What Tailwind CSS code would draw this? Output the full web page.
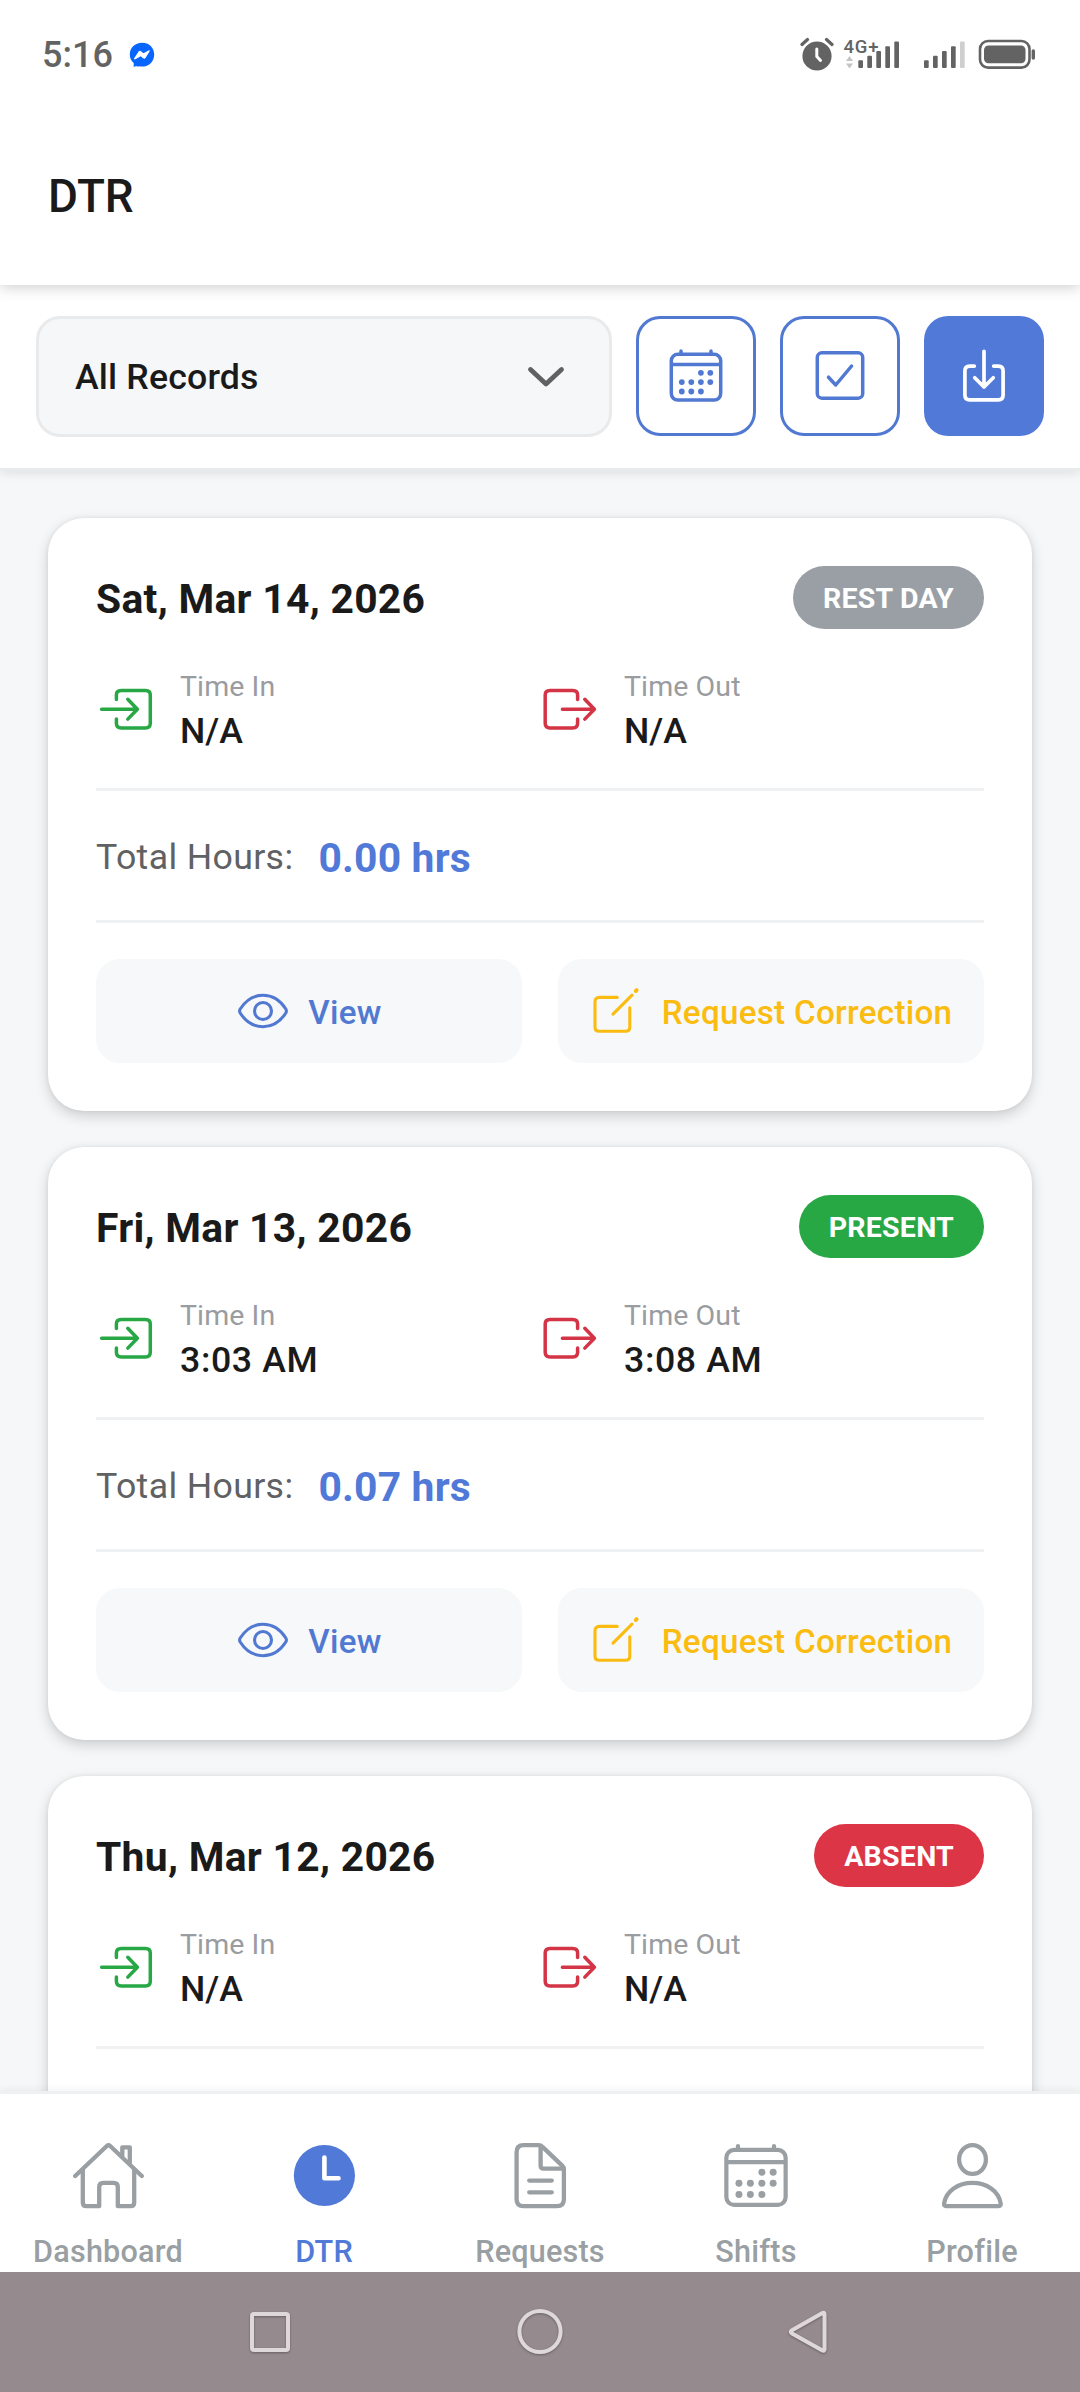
<!DOCTYPE html>
<html lang="en">
<head>
  <meta charset="UTF-8">
  <meta name="viewport" content="width=device-width, initial-scale=1.0">
  <title>DTR</title>
  <!-- Tailwind CSS -->
  <script src="https://cdn.jsdelivr.net/npm/@tailwindcss/browser@4"></script>
</head>
<body class="bg-white font-['Roboto',sans-serif] text-[#1a1a1a]">

  <!-- Shared icons -->
  <svg class="hidden" xmlns="http://www.w3.org/2000/svg">
    <symbol id="calendar" viewBox="0 0 60 60">
      <g fill="none" stroke="currentColor" stroke-width="3.5" stroke-linecap="round">
        <rect x="5.3" y="8.3" width="49.4" height="45.8" rx="6.5" />
        <path d="M6 18.4H54M15 5V8M45 5V8" />
      </g>
      <g fill="currentColor">
        <circle cx="34.9" cy="26.8" r="2.9" /><circle cx="44.3" cy="26.8" r="2.9" />
        <circle cx="15.8" cy="36.1" r="2.9" /><circle cx="25.3" cy="36.1" r="2.9" /><circle cx="34.9" cy="36.1" r="2.9" /><circle cx="44.3" cy="36.1" r="2.9" />
        <circle cx="15.8" cy="45.5" r="2.9" /><circle cx="25.3" cy="45.5" r="2.9" /><circle cx="34.9" cy="45.5" r="2.9" />
      </g>
    </symbol>
    <symbol id="time-in" viewBox="0 0 60 60">
      <path fill="none" stroke="currentColor" stroke-width="3.5" stroke-linecap="round" stroke-linejoin="round" d="M20.4 20.4V16.1Q20.4 11.5 25.2 11.5H49.5Q54.3 11.5 54.3 16.1V44.300Q54.3 49 49.5 49H25.2Q20.4 49 20.4 44.300V39.900M5.6 30.300H41.4M31.8 20.300L41.4 30.300L31.8 40.100" />
    </symbol>
    <symbol id="time-out" viewBox="0 0 60 60">
      <path fill="none" stroke="currentColor" stroke-width="3.5" stroke-linecap="round" stroke-linejoin="round" d="M37.6 20.4V16.1Q37.6 11.5 32.8 11.5H10Q5.2 11.5 5.2 16.1V44.300Q5.2 49 10 49H32.8Q37.6 49 37.6 44.300V39.900M22.4 30.300H54.4M44.8 20.300L54.4 30.300L44.8 40.100" />
    </symbol>
    <symbol id="eye" viewBox="0 0 54 54">
      <g fill="none" stroke="currentColor" stroke-width="3.1">
        <path d="M4.2 25C9 17.5 17 11.3 27 11.3S45 17.5 49.8 25Q51 27 49.8 29C45 36.5 37 42.7 27 42.7S9 36.5 4.2 29Q3 27 4.2 25Z" />
        <circle cx="27" cy="27" r="8.5" />
      </g>
    </symbol>
    <symbol id="edit" viewBox="0 0 54 54">
      <path fill="none" stroke="currentColor" stroke-width="3.1" stroke-linecap="round" stroke-linejoin="round" d="M27.2 13.4H9.3Q5 13.4 5 17.7V43Q5 47.3 9.3 47.3H35.5Q39.8 47.3 39.8 43V23.8M23 30.2L42 11.2" />
      <path fill="none" stroke="currentColor" stroke-width="4" stroke-linecap="round" d="M45.8 7L46.6 6.2" />
    </symbol>
  </svg>

  <div class="flex h-[2392px] w-[1080px] flex-col overflow-hidden">

    <!-- Status bar + title -->
    <header class="relative z-20 h-[285px] shrink-0 bg-white shadow-[0_2px_14px_rgba(0,0,0,0.2)]">
      <div class="flex h-[108px] items-center justify-between pl-[42px] pr-[44px] text-[#636363]">
        <div class="flex items-center gap-[16px]">
          <span class="mt-px text-[36px] font-medium leading-none">5:16</span>
          <svg class="mt-px size-[26px]" viewBox="0 0 26 26">
            <path fill="#0866ff" d="M13 .7C6 .7.8 5.7.8 12.4c0 3.4 1.4 6.3 3.9 8.5V25l2.6-1.1 1.6.8 1-.4c1 .2 2 .3 3.1.3 7 0 12.2-5.2 12.2-12.2S20 .7 13 .7Z" />
            <path fill="#fff" d="M5 16.4L9.6 9.6Q10.6 8.2 12 9.3L14.500 11.3L19.500 8.6Q21.500 7.8 20.500 9.6L16.500 16Q15.500 17.2 14.1 16.2L11.7 14.3L6.4 17.2Q4.500 17.700 5 16.4Z" />
          </svg>
        </div>
        <div class="flex items-center">
          <svg class="size-[34px]" viewBox="0 0 34 34">
            <circle cx="17" cy="19" r="14.6" fill="currentColor" />
            <path d="M2 7.5L7.5 2.5M32 7.5L26.5 2.5" stroke="currentColor" stroke-width="3.2" stroke-linecap="round" />
            <path d="M16.8 12V19.5L20.5 23.5" fill="none" stroke="#fff" stroke-width="3" stroke-linecap="round" />
          </svg>
          <svg class="ml-[9px] h-[34px] w-[58px]" viewBox="0 0 58 34" fill="currentColor">
            <text x="0.5" y="15.500" font-family="Roboto" font-size="18.5" font-weight="500" textLength="35">4G+</text>
            <path fill="#c4c4c4" d="M6.5 19L10 24H3ZM6.5 31.5L10 26.5H3Z" />
            <rect x="15.3" y="23.3" width="4.7" height="7.7" rx="1" /><rect x="24.3" y="18.7" width="4.7" height="12.3" rx="1" /><rect x="33.3" y="14" width="4.7" height="17" rx="1" /><rect x="42.3" y="9.3" width="4.7" height="21.7" rx="1" /><rect x="51.3" y="4.6" width="4.7" height="26.4" rx="1" />
          </svg>
          <svg class="ml-[21px] h-[34px] w-[44px]" viewBox="0 0 44 34" fill="currentColor">
            <rect x="2" y="23.3" width="4.7" height="7.7" rx="1" /><rect x="11" y="18.7" width="4.7" height="12.3" rx="1" /><rect x="20" y="14" width="4.7" height="17" rx="1" /><rect x="29" y="9.3" width="4.7" height="21.7" rx="1" />
            <rect x="38" y="4.6" width="4.7" height="26.4" rx="1" fill="#cfcfcf" />
          </svg>
          <svg class="ml-[12px] h-[34px] w-[58px]" viewBox="0 0 58 34">
            <rect x="2" y="4" width="49.5" height="26.6" rx="8" fill="none" stroke="currentColor" stroke-width="2.6" />
            <rect x="6" y="8.5" width="41.5" height="17.8" rx="4.5" fill="currentColor" />
            <rect x="53.6" y="12.2" width="3.4" height="10.6" rx="1.7" fill="currentColor" />
          </svg>
        </div>
      </div>
      <div class="flex h-[177px] items-center px-12">
        <h1 class="mt-px text-[45.9px] font-medium leading-none">DTR</h1>
      </div>
    </header>

    <!-- Filter bar -->
    <section class="relative z-10 flex h-[186px] shrink-0 gap-6 border-b-3 border-[#e8eaec] bg-white px-9 pt-[31px] shadow-[0_2px_10px_rgba(0,0,0,0.1)]">
      <div class="flex h-[121px] flex-1 items-center justify-between rounded-3xl border-3 border-[#e8eaeb] bg-[#f6f7f9] pl-9 pr-[43px]">
        <span class="pt-[3px] text-[35.7px] font-medium leading-none tracking-[0.15px]">All Records</span>
        <svg class="h-6 w-10 text-[#5f6163]" viewBox="0 0 40 24">
          <path d="M4.5 4.5L20 19L35.5 4.5" fill="none" stroke="currentColor" stroke-width="4.8" stroke-linecap="round" stroke-linejoin="round" />
        </svg>
      </div>
      <button class="flex size-30 items-center justify-center rounded-3xl border-3 border-[#5179d2] bg-white text-[#5179d2]">
        <svg class="size-15"><use href="#calendar" /></svg>
      </button>
      <button class="flex size-30 items-center justify-center rounded-3xl border-3 border-[#5179d2] bg-white text-[#5179d2]">
        <svg class="size-15" viewBox="0 0 60 60" fill="none" stroke="currentColor" stroke-width="3.5" stroke-linecap="round" stroke-linejoin="round">
          <rect x="7.3" y="6.8" width="45.4" height="45.4" rx="4.5" />
          <path d="M18.5 31.2L25.7 39L41.6 20" />
        </svg>
      </button>
      <button class="flex size-30 items-center justify-center rounded-3xl bg-[#5179d8] text-white">
        <svg class="size-15" viewBox="0 0 60 60" fill="none" stroke="currentColor" stroke-width="3.7" stroke-linecap="round" stroke-linejoin="round">
          <path d="M20.3 20.1H15.7Q10.9 20.1 10.9 24.9V49Q10.9 53.8 15.7 53.8H44.3Q49.1 53.8 49.1 49V24.9Q49.1 20.1 44.3 20.1H39.7M30 5.3V41M20.7 31.8L30 41L39.3 31.8" />
        </svg>
      </button>
    </section>

    <!-- Records -->
    <main class="flex min-h-0 flex-1 flex-col gap-9 overflow-hidden bg-[#f5f7f9] px-12 pt-[47px]">

      <article class="h-[593px] shrink-0 rounded-[36px] bg-white p-12 shadow-[0_5px_14px_rgba(0,0,0,0.17),0_0_4px_rgba(0,0,0,0.07)]">
        <div class="flex h-[63px] items-center justify-between">
          <h2 class="pt-[3px] text-[40.8px] font-bold leading-none tracking-[0.3px]">Sat, Mar 14, 2026</h2>
          <span class="flex h-[63px] items-center rounded-full bg-[#999fa5] px-[30px] pt-[3px] text-[28.5px] font-bold leading-none tracking-[0.25px] text-white">REST DAY</span>
        </div>
        <div class="mt-[35px] grid h-[127px] grid-cols-2 border-b-3 border-[#eff1f2] pb-[35px]">
          <div class="flex items-center gap-6">
            <svg class="size-15 text-[#28a745]"><use href="#time-in" /></svg>
            <div class="relative top-[2.5px]">
              <p class="text-[28.5px] leading-[40px] tracking-[0.1px] text-[#999ca0]">Time In</p>
              <p class="text-[35.7px] font-medium leading-[49px]">N/A</p>
            </div>
          </div>
          <div class="flex items-center gap-6">
            <svg class="size-15 text-[#d33446]"><use href="#time-out" /></svg>
            <div class="relative top-[2.5px]">
              <p class="text-[28.5px] leading-[40px] tracking-[0.1px] text-[#999ca0]">Time Out</p>
              <p class="text-[35.7px] font-medium leading-[49px]">N/A</p>
            </div>
          </div>
        </div>
        <div class="flex h-33 items-center gap-[25px] border-b-3 border-[#eff1f2] pt-[5px]">
          <span class="text-[35.7px] leading-none tracking-[0.35px] text-[#5f6163]">Total Hours:</span>
          <span class="text-[40.8px] font-bold leading-none tracking-[0.2px] text-[#5179d8]">0.00 hrs</span>
        </div>
        <div class="mt-9 grid grid-cols-2 gap-9">
          <button class="flex h-[104px] items-center justify-center gap-[18px] rounded-3xl bg-[#f6f8f9] text-[33.15px] font-medium tracking-[0.3px] text-[#5179d2]">
            <svg class="size-13.5"><use href="#eye" /></svg>
            <span class="pt-[3px]">View</span>
          </button>
          <button class="flex h-[104px] items-center justify-center gap-[18px] whitespace-nowrap rounded-3xl bg-[#f6f8f9] text-[33.15px] font-medium tracking-[0.3px] text-[#fbbc12]">
            <svg class="size-13.5"><use href="#edit" /></svg>
            <span class="pt-[3px]">Request Correction</span>
          </button>
        </div>
      </article>

      <article class="h-[593px] shrink-0 rounded-[36px] bg-white p-12 shadow-[0_5px_14px_rgba(0,0,0,0.17),0_0_4px_rgba(0,0,0,0.07)]">
        <div class="flex h-[63px] items-center justify-between">
          <h2 class="pt-[3px] text-[40.8px] font-bold leading-none tracking-[0.3px]">Fri, Mar 13, 2026</h2>
          <span class="flex h-[63px] items-center rounded-full bg-[#28a745] px-[30px] pt-[3px] text-[28.5px] font-bold leading-none tracking-[0.25px] text-white">PRESENT</span>
        </div>
        <div class="mt-[35px] grid h-[127px] grid-cols-2 border-b-3 border-[#eff1f2] pb-[35px]">
          <div class="flex items-center gap-6">
            <svg class="size-15 text-[#28a745]"><use href="#time-in" /></svg>
            <div class="relative top-[2.5px]">
              <p class="text-[28.5px] leading-[40px] tracking-[0.1px] text-[#999ca0]">Time In</p>
              <p class="text-[35.7px] font-medium leading-[49px] tracking-[0.6px]">3:03 AM</p>
            </div>
          </div>
          <div class="flex items-center gap-6">
            <svg class="size-15 text-[#d33446]"><use href="#time-out" /></svg>
            <div class="relative top-[2.5px]">
              <p class="text-[28.5px] leading-[40px] tracking-[0.1px] text-[#999ca0]">Time Out</p>
              <p class="text-[35.7px] font-medium leading-[49px] tracking-[0.6px]">3:08 AM</p>
            </div>
          </div>
        </div>
        <div class="flex h-33 items-center gap-[25px] border-b-3 border-[#eff1f2] pt-[5px]">
          <span class="text-[35.7px] leading-none tracking-[0.35px] text-[#5f6163]">Total Hours:</span>
          <span class="text-[40.8px] font-bold leading-none tracking-[0.2px] text-[#5179d8]">0.07 hrs</span>
        </div>
        <div class="mt-9 grid grid-cols-2 gap-9">
          <button class="flex h-[104px] items-center justify-center gap-[18px] rounded-3xl bg-[#f6f8f9] text-[33.15px] font-medium tracking-[0.3px] text-[#5179d2]">
            <svg class="size-13.5"><use href="#eye" /></svg>
            <span class="pt-[3px]">View</span>
          </button>
          <button class="flex h-[104px] items-center justify-center gap-[18px] whitespace-nowrap rounded-3xl bg-[#f6f8f9] text-[33.15px] font-medium tracking-[0.3px] text-[#fbbc12]">
            <svg class="size-13.5"><use href="#edit" /></svg>
            <span class="pt-[3px]">Request Correction</span>
          </button>
        </div>
      </article>

      <article class="h-[593px] shrink-0 rounded-[36px] bg-white p-12 shadow-[0_5px_14px_rgba(0,0,0,0.17),0_0_4px_rgba(0,0,0,0.07)]">
        <div class="flex h-[63px] items-center justify-between">
          <h2 class="pt-[3px] text-[40.8px] font-bold leading-none tracking-[0.3px]">Thu, Mar 12, 2026</h2>
          <span class="flex h-[63px] items-center rounded-full bg-[#dc3545] px-[30px] pt-[3px] text-[28.5px] font-bold leading-none tracking-[0.25px] text-white">ABSENT</span>
        </div>
        <div class="mt-[35px] grid h-[127px] grid-cols-2 border-b-3 border-[#eff1f2] pb-[35px]">
          <div class="flex items-center gap-6">
            <svg class="size-15 text-[#28a745]"><use href="#time-in" /></svg>
            <div class="relative top-[2.5px]">
              <p class="text-[28.5px] leading-[40px] tracking-[0.1px] text-[#999ca0]">Time In</p>
              <p class="text-[35.7px] font-medium leading-[49px]">N/A</p>
            </div>
          </div>
          <div class="flex items-center gap-6">
            <svg class="size-15 text-[#d33446]"><use href="#time-out" /></svg>
            <div class="relative top-[2.5px]">
              <p class="text-[28.5px] leading-[40px] tracking-[0.1px] text-[#999ca0]">Time Out</p>
              <p class="text-[35.7px] font-medium leading-[49px]">N/A</p>
            </div>
          </div>
        </div>
      </article>
    </main>

    <!-- Tab bar -->
    <nav class="relative z-10 grid h-[181px] shrink-0 grid-cols-5 border-t-3 border-[#eef0f2] bg-white pt-[46px] text-[30.6px] font-medium tracking-[0.2px] text-[#999fa2] shadow-[0_-2px_8px_rgba(0,0,0,0.05)]">
      <a class="flex flex-col items-center gap-[23px]">
        <svg class="size-18 shrink-0" viewBox="0 0 72 72" fill="none" stroke="currentColor" stroke-width="4.3" stroke-linecap="round" stroke-linejoin="round">
          <path d="M3.2 36L34.8 6Q36.5 4.4 38.2 6L69.8 36" />
          <path d="M10.8 30V62.5Q10.8 66.2 14.5 66.2H27.2V47Q27.2 42.9 31.3 42.9H41.7Q45.8 42.9 45.8 47V66.2H58.5Q62.2 66.2 62.2 62.5V30" />
          <path d="M50.3 16V7.3H57.8V23" />
        </svg>
        <span class="leading-[34px]">Dashboard</span>
      </a>
      <a class="flex flex-col items-center gap-[23px] text-[#5179d8]">
        <svg class="size-18 shrink-0" viewBox="0 0 72 72">
          <circle cx="36.4" cy="35.5" r="30.6" fill="currentColor" />
          <path d="M36.4 17.5V38.3H50.5" fill="none" stroke="#fff" stroke-width="4.6" stroke-linecap="round" stroke-linejoin="round" />
        </svg>
        <span class="leading-[34px]">DTR</span>
      </a>
      <a class="flex flex-col items-center gap-[23px]">
        <svg class="size-18 shrink-0" viewBox="0 0 72 72" fill="none" stroke="currentColor" stroke-width="4.3" stroke-linecap="round" stroke-linejoin="round">
          <path d="M19.6 5.2H34.5Q36.8 5.2 38.5 6.9L58.2 25.6Q59.9 27.3 59.9 29.6V59.2Q59.9 66.2 52.9 66.2H19.6Q12.6 66.2 12.6 59.2V12.2Q12.6 5.2 19.6 5.2Z" />
          <path d="M36.6 6V25.5Q36.6 28.6 39.7 28.6H59M25.2 40.6H47.8M25.2 52.3H47.8" />
        </svg>
        <span class="leading-[34px]">Requests</span>
      </a>
      <a class="flex flex-col items-center gap-[23px]">
        <svg class="size-18 shrink-0"><use href="#calendar" /></svg>
        <span class="leading-[34px]">Shifts</span>
      </a>
      <a class="flex flex-col items-center gap-[23px]">
        <svg class="size-18 shrink-0" viewBox="0 0 72 72" fill="none" stroke="currentColor" stroke-width="4.3" stroke-linejoin="round">
          <ellipse cx="36.5" cy="19.5" rx="13.4" ry="14.4" />
          <path d="M10.2 66.2Q7.6 66.2 8.2 63C10.2 51 22 42.9 36.4 42.9S62.6 51 64.6 63Q65.2 66.2 62.6 66.2Z" />
        </svg>
        <span class="leading-[34px]">Profile</span>
      </a>
    </nav>

    <!-- System navigation -->
    <footer class="relative z-20 flex h-30 shrink-0 items-center justify-center gap-[222px] bg-[#958a8d] text-[#dfd8da]">
      <svg class="size-12 drop-shadow-[0_1px_1px_rgba(0,0,0,0.3)]" viewBox="0 0 48 48" fill="none" stroke="currentColor" stroke-width="4">
        <rect x="6" y="6" width="36" height="36" rx="2" />
      </svg>
      <svg class="size-12 drop-shadow-[0_1px_1px_rgba(0,0,0,0.3)]" viewBox="0 0 48 48" fill="none" stroke="currentColor" stroke-width="4">
        <circle cx="24" cy="23.5" r="20.6" />
      </svg>
      <svg class="size-12 drop-shadow-[0_1px_1px_rgba(0,0,0,0.3)]" viewBox="0 0 48 48" fill="none" stroke="currentColor" stroke-width="4" stroke-linejoin="round">
        <path d="M36 5.2Q38.500 3.8 38.500 6.500V41Q38.500 43.700 36 42.2L6 25.500Q3.500 23.800 6 22.2Z" />
      </svg>
    </footer>
  </div>

</body>
</html>
